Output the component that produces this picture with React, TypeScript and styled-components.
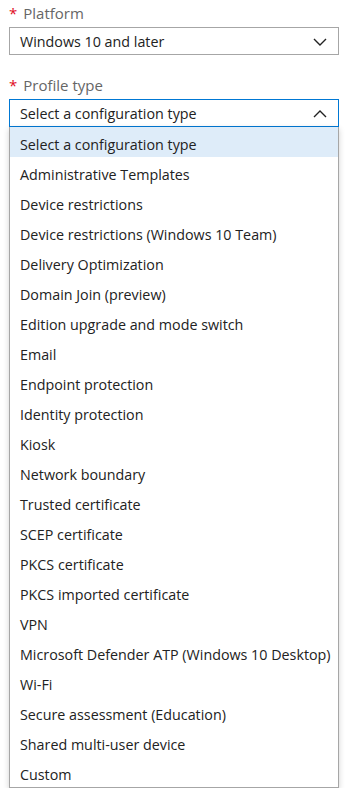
import React from "react";
import styled, { createGlobalStyle } from "styled-components";

const Global = createGlobalStyle`
  html, body { margin: 0; padding: 0; background: #fff; }
  body { font-family: "Segoe UI", "Open Sans", "Noto Sans", sans-serif; }
`;

const Page = styled.div`
  width: 330px;
  padding: 3px 0 0 9px;
  display: flex;
  flex-direction: column;
  gap: 20px;
`;

const Field = styled.div`
  display: flex;
  flex-direction: column;
  gap: 4px;
  position: relative;
`;

const Label = styled.div`
  font-size: 15px;
  line-height: 20px;
  color: #666;
  display: flex;
  align-items: baseline;
  gap: 6px;
`;

const Star = styled.span`
  color: #e00b1c;
  font-size: 15px;
`;

const SelectBox = styled.div<{ $open?: boolean }>`
  box-sizing: border-box;
  height: 28px;
  border: 1px solid ${(p) => (p.$open ? "#0078d4" : "#a6a6a6")};
  display: flex;
  align-items: center;
  justify-content: space-between;
  padding: 1px 11px 0 10px;
  font-size: 14.3px;
  color: #222;
`;

const List = styled.ul`
  list-style: none;
  margin: -4px 0 0 0;
  padding: 0;
  box-sizing: border-box;
  border: 1px solid #a6a6a6;
  border-top: none;
  box-shadow: 0 2px 6px rgba(0, 0, 0, 0.18);
  background: #fff;
`;

const Item = styled.li<{ $selected?: boolean }>`
  box-sizing: border-box;
  height: 30px;
  display: flex;
  align-items: center;
  padding: 4px 0 0 10px;
  font-size: 14.3px;
  color: #222;
  background: ${(p) => (p.$selected ? "#deecf9" : "transparent")};
`;

const Chevron = ({ up }: { up?: boolean }) => (
  <svg width="14" height="8" viewBox="0 0 14 8">
    <polyline
      points={up ? "1,7 7,1 13,7" : "1,1 7,7 13,1"}
      fill="none"
      stroke="#222"
      strokeWidth="1.4"
    />
  </svg>
);

const options = [
  "Select a configuration type",
  "Administrative Templates",
  "Device restrictions",
  "Device restrictions (Windows 10 Team)",
  "Delivery Optimization",
  "Domain Join (preview)",
  "Edition upgrade and mode switch",
  "Email",
  "Endpoint protection",
  "Identity protection",
  "Kiosk",
  "Network boundary",
  "Trusted certificate",
  "SCEP certificate",
  "PKCS certificate",
  "PKCS imported certificate",
  "VPN",
  "Microsoft Defender ATP (Windows 10 Desktop)",
  "Wi-Fi",
  "Secure assessment (Education)",
  "Shared multi-user device",
  "Custom",
];

export default function App() {
  return (
    <>
      <Global />
      <Page>
        <Field>
          <Label>
            <Star>*</Star>Platform
          </Label>
          <SelectBox>
            <span>Windows 10 and later</span>
            <Chevron />
          </SelectBox>
        </Field>
        <Field>
          <Label>
            <Star>*</Star>Profile type
          </Label>
          <SelectBox $open>
            <span>Select a configuration type</span>
            <Chevron up />
          </SelectBox>
          <List>
            {options.map((o, i) => (
              <Item key={o} $selected={i === 0}>
                {o}
              </Item>
            ))}
          </List>
        </Field>
      </Page>
    </>
  );
}
